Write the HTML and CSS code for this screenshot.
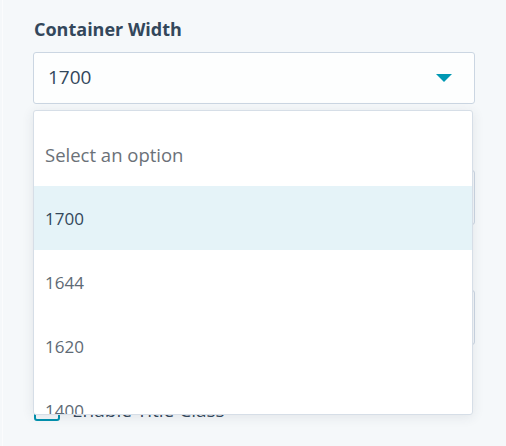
FILE: index.html
```html
<!DOCTYPE html>
<html>
<head>
<meta charset="utf-8">
<link rel="stylesheet" href="styles.css">
</head>
<body>
<div class="panel">
  <div class="field">
    <div class="label">Container Width</div>
    <div class="select-wrap">
      <div class="select">
        <span class="value">1700</span>
        <svg class="caret" width="16" height="8" viewBox="0 0 16 8"><path d="M0 0 H16 L8 8 Z" fill="#0098b3"/></svg>
      </div>
      <div class="menu">
        <div class="opt placeholder">Select an option</div>
        <div class="opt active">1700</div>
        <div class="opt">1644</div>
        <div class="opt">1620</div>
        <div class="opt">1400</div>
      </div>
    </div>
  </div>
  <div class="field hidden-field">
    <div class="spacer"></div>
    <div class="input"></div>
  </div>
  <div class="field hidden-field">
    <div class="spacer"></div>
    <div class="input"></div>
  </div>
  <label class="check">
    <span class="box"></span>
    <span class="check-text">Enable Title Class</span>
  </label>
</div>
</body>
</html>
```
FILE: styles.css
```css
html, body {
  margin: 0;
  padding: 0;
  background: #f5f8fa;
  font-family: "Open Sans", "Noto Sans", sans-serif;
  color: #33475b;
}
.panel {
  height: 446px;
  box-sizing: border-box;
  margin-left: 2px;
  border-left: 1px solid #fbfcfd;
  padding: 17px 31px 0 30px;
  display: flex;
  flex-direction: column;
}
.field {
  display: flex;
  flex-direction: column;
}
.label {
  font-size: 18px;
  font-weight: 700;
  line-height: 24px;
  height: 24px;
  margin-left: 1px;
  margin-bottom: 11px;
}
.spacer {
  height: 35px;
}
.select-wrap {
  position: relative;
}
.select {
  height: 52px;
  box-sizing: border-box;
  border: 1px solid #cbd6e2;
  border-radius: 3px;
  background: #fdfefe;
  display: flex;
  align-items: center;
  justify-content: space-between;
  padding: 0 22px 2px 14px;
}
.value {
  font-size: 19px;
}
.caret {
  display: block;
  margin-top: 2px;
}
.menu {
  position: absolute;
  left: 0;
  top: 58px;
  width: 440px;
  height: 305px;
  box-sizing: border-box;
  background: #fff;
  border: 1px solid #d6dee7;
  border-radius: 3px;
  box-shadow: 0 2px 12px rgba(45, 62, 80, 0.10);
  padding-top: 11px;
  overflow: hidden;
  z-index: 2;
}
.opt {
  height: 64px;
  display: flex;
  align-items: center;
  padding-left: 11px;
  font-size: 17px;
  color: #5e6a75;
}
.opt.placeholder {
  font-size: 18.5px;
  color: #6b7178;
}
.opt.active {
  background: #e5f3f8;
  color: #33475b;
}
.hidden-field {
  margin-top: 31px;
}
.hidden-field + .hidden-field {
  margin-top: 30px;
}
.input {
  height: 55px;
  box-sizing: border-box;
  border: 1px solid #cbd6e2;
  border-radius: 3px;
  background: #f5f8fa;
}
.check {
  margin-top: 54px;
  display: flex;
  align-items: flex-end;
  gap: 12px;
  margin-left: 1px;
}
.box {
  width: 26px;
  height: 20px;
  box-sizing: border-box;
  border: 2px solid #0091ae;
  border-radius: 3px;
}
.check-text {
  font-size: 19px;
  line-height: 22px;
  color: #33475b;
}
```
